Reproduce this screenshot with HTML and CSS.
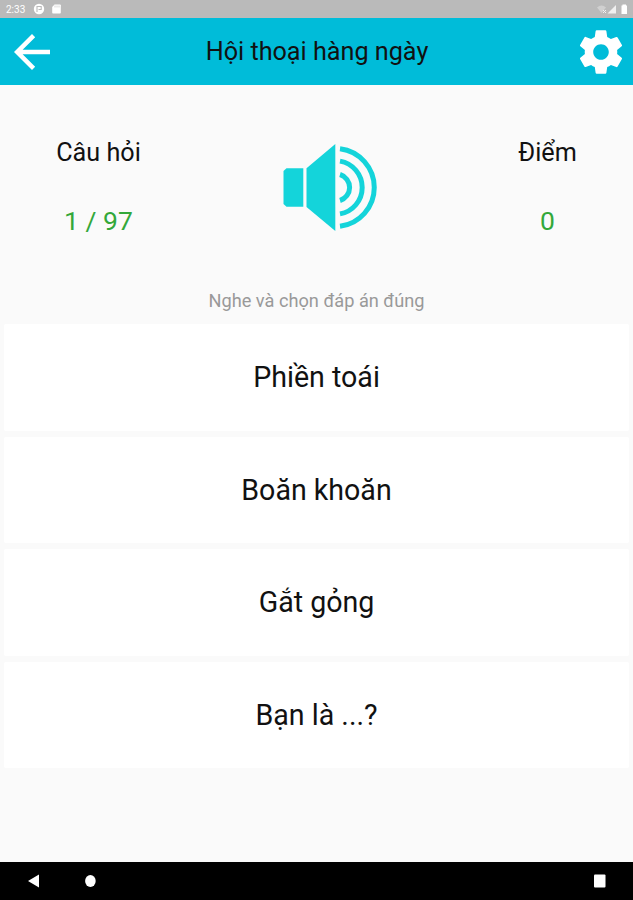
FILE: index.html
```html
<!DOCTYPE html>
<html lang="vi">
  <head>
    <meta charset="UTF-8">
    <title>Hội thoại hàng ngày</title>
    <link rel="stylesheet" href="styles.css">
  </head>
  <body>
    <div class="status-bar">
      <span class="clock">2:33</span>
      <svg class="status-left" width="30" height="12" viewBox="0 0 30 12">
        <circle cx="6" cy="6" r="5.2" fill="#fff"/>
        <path d="M4 9V3.5h4.2v3H5.5" fill="none" stroke="#bababa" stroke-width="1.1"/>
        <path d="M21.500 1.500H27q.8 0 .8.8v7.400q0 .8-.8.8h-7q-.8 0-.8-.8V4z" fill="#fff"/>
        <path d="M22 2.500v2M24 2.500v2M26 2.500v2" stroke="#ccc" stroke-width=".8"/>
      </svg>
      <svg class="status-right" width="34" height="12" viewBox="0 0 34 12">
        <path d="M0 4.500q4.500-4 9 0L4.500 10z" fill="#d0d0d0"/>
        <path d="M6 7l3 3M9 7l-3 3" stroke="#f2f2f2" stroke-width="1"/>
        <path d="M10.500 10.500L19 2v8.500z" fill="#f0f0f0"/>
        <path d="M25.500 1.500h3.500v1h1v8.500h-5.500v-8.500h1z" fill="#fff"/>
      </svg>
    </div>

    <div class="toolbar">
      <button class="icon-button">
        <svg width="54" height="54" viewBox="0 0 24 24"><path fill="#fff" d="M20 11H7.830l5.590-5.590L12 4l-8 8 8 8 1.410-1.410L7.830 13H20v-2z"/></svg>
      </button>
      <h1 class="title">Hội thoại hàng ngày</h1>
      <button class="icon-button">
        <svg width="52" height="52" viewBox="0 0 24 24"><path fill="#fff" d="M19.430 12.980c.04-.32.07-.64.07-.98s-.03-.66-.07-.98l2.110-1.650c.19-.15.24-.42.12-.64l-2-3.460c-.12-.22-.39-.3-.61-.22l-2.490 1c-.52-.4-1.080-.73-1.690-.98l-.38-2.650C14.460 2.180 14.250 2 14 2h-4c-.25 0-.46.18-.49.42l-.38 2.650c-.61.25-1.170.59-1.690.98l-2.490-1c-.23-.09-.49 0-.61.22l-2 3.460c-.13.22-.07.49.12.64l2.110 1.650c-.04.32-.07.65-.07.98s.03.66.07.98l-2.110 1.650c-.19.15-.24.42-.12.64l2 3.460c.12.22.39.3.61.22l2.490-1c.52.4 1.080.73 1.690.98l.38 2.650c.03.24.24.42.49.42h4c.25 0 .46-.18.49-.42l.38-2.650c.61-.25 1.170-.59 1.690-.98l2.490 1c.23.09.49 0 .61-.22l2-3.460c.12-.22.07-.49-.12-.64l-2.110-1.650zM12 15.600c-1.980 0-3.600-1.620-3.600-3.600s1.620-3.600 3.600-3.600 3.600 1.620 3.600 3.600-1.620 3.600-3.600 3.600z"/></svg>
      </button>
    </div>

    <div class="quiz">
      <div class="score-row">
        <div class="score questions">
          <div class="score-label">Câu hỏi</div>
          <div class="score-value">1 / 97</div>
        </div>
        <svg class="speaker" width="96" height="90" viewBox="0 0 96 90">
          <path fill="#14d4da" d="M4.500 25.300H21.300V63.800H4.500L1.500 61V28z"/>
          <path fill="#14d4da" d="M24.500 25.300L53.300 1V88L24.500 64z"/>
          <g fill="none" stroke="#14d4da" stroke-width="5">
            <path d="M58 31.500A13.600 13.600 0 0 1 58 57.500"/>
            <path d="M58 18.100A26.800 26.800 0 0 1 58 70.900"/>
            <path d="M58 5.700A39.100 39.100 0 0 1 58 83.300"/>
          </g>
        </svg>
        <div class="score">
          <div class="score-label">Điểm</div>
          <div class="score-value">0</div>
        </div>
      </div>
      <p class="hint">Nghe và chọn đáp án đúng</p>
      <div class="answers">
        <button class="answer">Phiền toái</button>
        <button class="answer">Boăn khoăn</button>
        <button class="answer">Gắt gỏng</button>
        <button class="answer">Bạn là ...?</button>
      </div>
    </div>

    <div class="nav-bar">
      <svg width="12" height="14" viewBox="0 0 12 14"><path fill="#fff" d="M11 .5v13L0 7z"/></svg>
      <svg class="home" width="12" height="14" viewBox="0 0 12 14"><ellipse cx="6.400" cy="7" rx="5.300" ry="6" fill="#fff"/></svg>
      <svg class="recent" width="12" height="14" viewBox="0 0 12 14"><rect y=".5" width="11.500" height="13" rx="1" fill="#fff"/></svg>
    </div>
  </body>
</html>
```

FILE: styles.css
```css
body {
display: flex;
flex-direction: column;
height: 900px;
margin: 0;
background-color: #fafafa;
color: #111;
font-family: Roboto, "Liberation Sans", sans-serif;
overflow: hidden;
}

button {
padding: 0;
border: none;
background: none;
font-family: inherit;
color: inherit;
cursor: pointer;
}

svg {
display: block;
}

.status-bar {
display: flex;
align-items: center;
height: 18px;
padding: 0 2px 0 6px;
background-color: #bababa;
color: white;
font-size: 10px;
box-sizing: border-box;
}

.clock {
width: 27px;
}

.status-right {
margin-left: auto;
}

.toolbar {
display: flex;
align-items: center;
justify-content: space-between;
height: 67px;
padding: 0 6px 0 5px;
background-color: #00bcd9;
}

.title {
margin: 0;
font-size: 25.2px;
font-weight: 400;
}

.quiz {
flex: 1;
}

.score-row {
display: flex;
justify-content: space-between;
height: 205px;
}

.score {
width: 171px;
padding-top: 51px;
box-sizing: border-box;
text-align: center;
font-size: 25.2px;
line-height: 34px;
}

.questions {
width: 197px;
}

.score-value {
margin-top: 34px;
color: #33a83a;
font-size: 26.5px;
}

.speaker {
margin-top: 58px;
}

.hint {
margin: 0;
height: 34px;
text-align: center;
font-size: 18.2px;
line-height: 22px;
color: #999;
}

.answers {
display: flex;
flex-direction: column;
gap: 6px;
padding: 0 4px;
}

.answer {
height: 106.5px;
border-radius: 2px;
background-color: white;
font-size: 28.6px;
}

.nav-bar {
display: flex;
align-items: center;
height: 38px;
padding: 0 27px 0 28px;
background-color: black;
}

.home {
margin-left: 44px;
}

.recent {
margin-left: auto;
}
```
